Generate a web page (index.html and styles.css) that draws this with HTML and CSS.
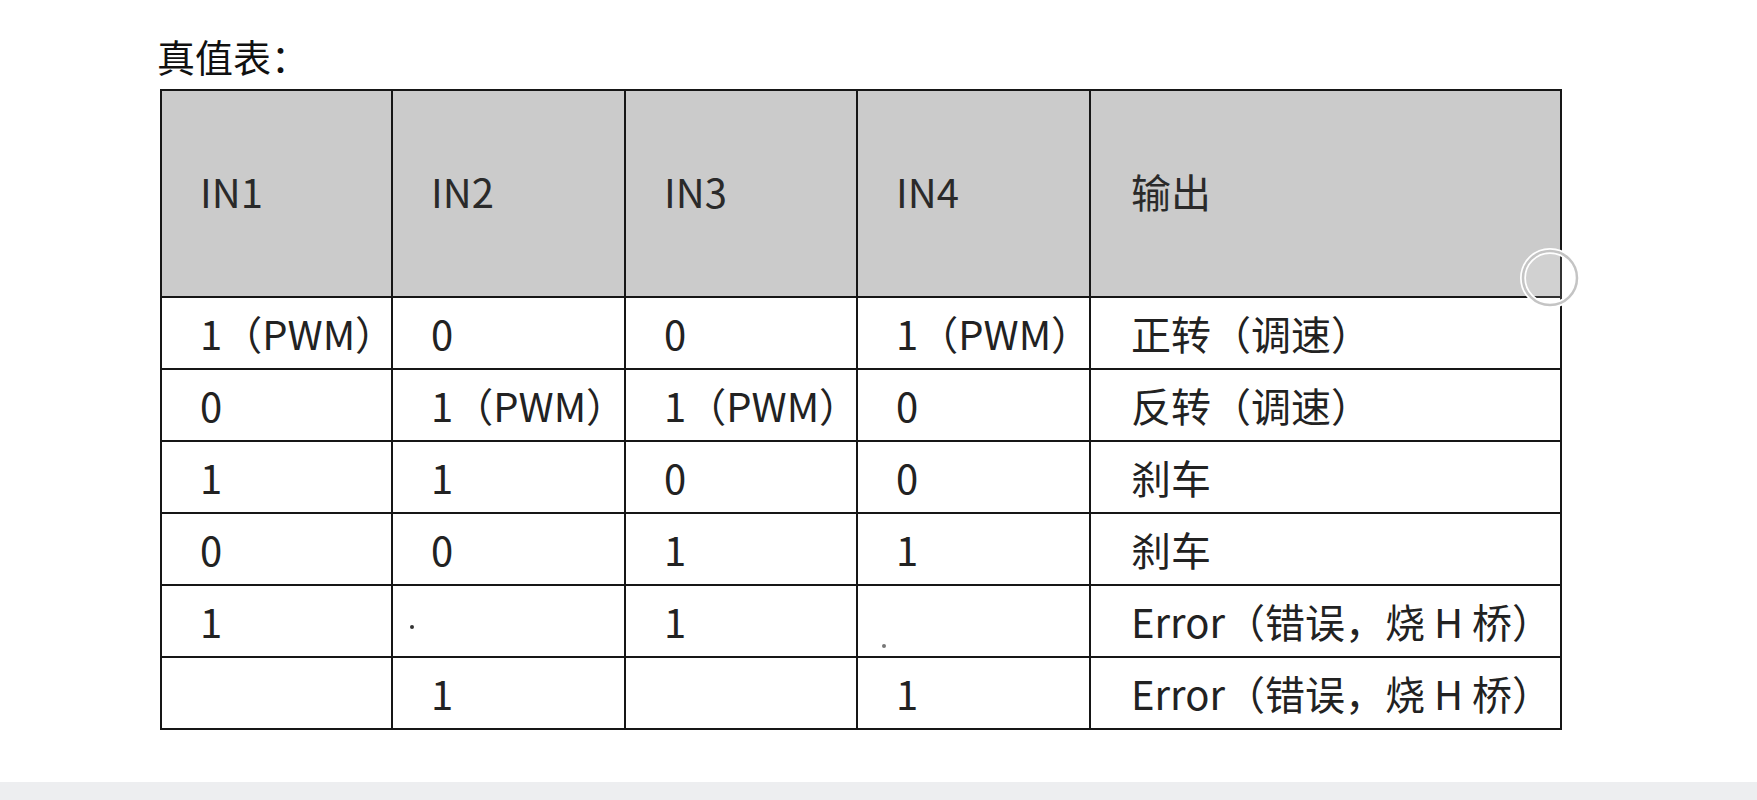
FILE: index.html
```html
<!DOCTYPE html>
<html lang="zh-CN">
<head>
<meta charset="utf-8">
<title>真值表</title>
<link rel="stylesheet" href="styles.css">
</head>
<body>
<div class="page">
  <h1 class="title">真值表：</h1>
  <table class="truth">
    <colgroup>
      <col class="c1"><col class="c2"><col class="c3"><col class="c4"><col class="c5">
    </colgroup>
    <thead>
      <tr class="head">
        <th>IN1</th><th>IN2</th><th>IN3</th><th>IN4</th><th class="cn">输出</th>
      </tr>
    </thead>
    <tbody>
      <tr><td>1（PWM）</td><td>0</td><td>0</td><td>1（PWM）</td><td class="cn">正转（调速）</td></tr>
      <tr><td>0</td><td>1（PWM）</td><td>1（PWM）</td><td>0</td><td class="cn">反转（调速）</td></tr>
      <tr><td>1</td><td>1</td><td>0</td><td>0</td><td class="cn">刹车</td></tr>
      <tr><td>0</td><td>0</td><td>1</td><td>1</td><td class="cn">刹车</td></tr>
      <tr><td>1</td><td class="mark-mid"><span class="dot"></span></td><td>1</td><td class="mark-low"><span class="dot dot-low"></span></td><td class="cn">Error（错误，烧 H 桥）</td></tr>
      <tr><td></td><td>1</td><td></td><td>1</td><td class="cn">Error（错误，烧 H 桥）</td></tr>
    </tbody>
  </table>
  <svg class="ring" width="64" height="64" viewBox="0 0 64 64" aria-hidden="true">
    <circle cx="32" cy="32" r="27" fill="rgba(255,255,255,0.12)" stroke="#ffffff" stroke-width="6"/>
    <circle cx="32" cy="32" r="27" fill="none" stroke="#c4c4c4" stroke-width="2.5"/>
  </svg>
</div>
<div class="band"></div>
</body>
</html>
```

FILE: styles.css
```css
html, body {
  margin: 0;
  padding: 0;
  background: #ffffff;
}

body {
  width: 1757px;
  height: 800px;
  overflow: hidden;
  font-family: "Noto Sans CJK SC", "Noto Sans", sans-serif;
  color: #1c1c1c;
}

.page {
  position: relative;
  height: 782px;
  box-sizing: border-box;
  padding: 33px 0 0 157px;
}

.title {
  margin: 0 0 10px 0;
  font-size: 38px;
  line-height: 46px;
  font-weight: 400;
  color: #111;
}

.truth {
  margin-left: 3px;
  border-collapse: collapse;
  table-layout: fixed;
  width: 1400px;
}

.c1 { width: 231px; }
.c2 { width: 233px; }
.c3 { width: 232px; }
.c4 { width: 233px; }
.c5 { width: 471px; }

.truth th,
.truth td {
  border: 2px solid #161616;
  padding: 0 0 0 38px;
  text-align: left;
  vertical-align: middle;
  font-size: 40px;
  line-height: 48px;
  font-weight: 400;
  white-space: nowrap;
  color: #222;
}

.truth th {
  background: #cbcbcb;
  height: 199px;
  padding-bottom: 6px;
  color: #2a2a2a;
}

.truth td {
  height: 70px;
}

.truth .cn {
  padding-left: 40px;
}

.truth .mark-mid {
  padding-left: 17px;
}

.truth .mark-low {
  padding-left: 24px;
}

.dot {
  display: inline-block;
  width: 4px;
  height: 4px;
  border-radius: 50%;
  background: #333;
  vertical-align: middle;
}

.dot-low {
  vertical-align: -12px;
  background: #777;
}

.ring {
  position: absolute;
  left: 1518px;
  top: 246px;
}

.band {
  height: 18px;
  background: #edeef0;
}
```
